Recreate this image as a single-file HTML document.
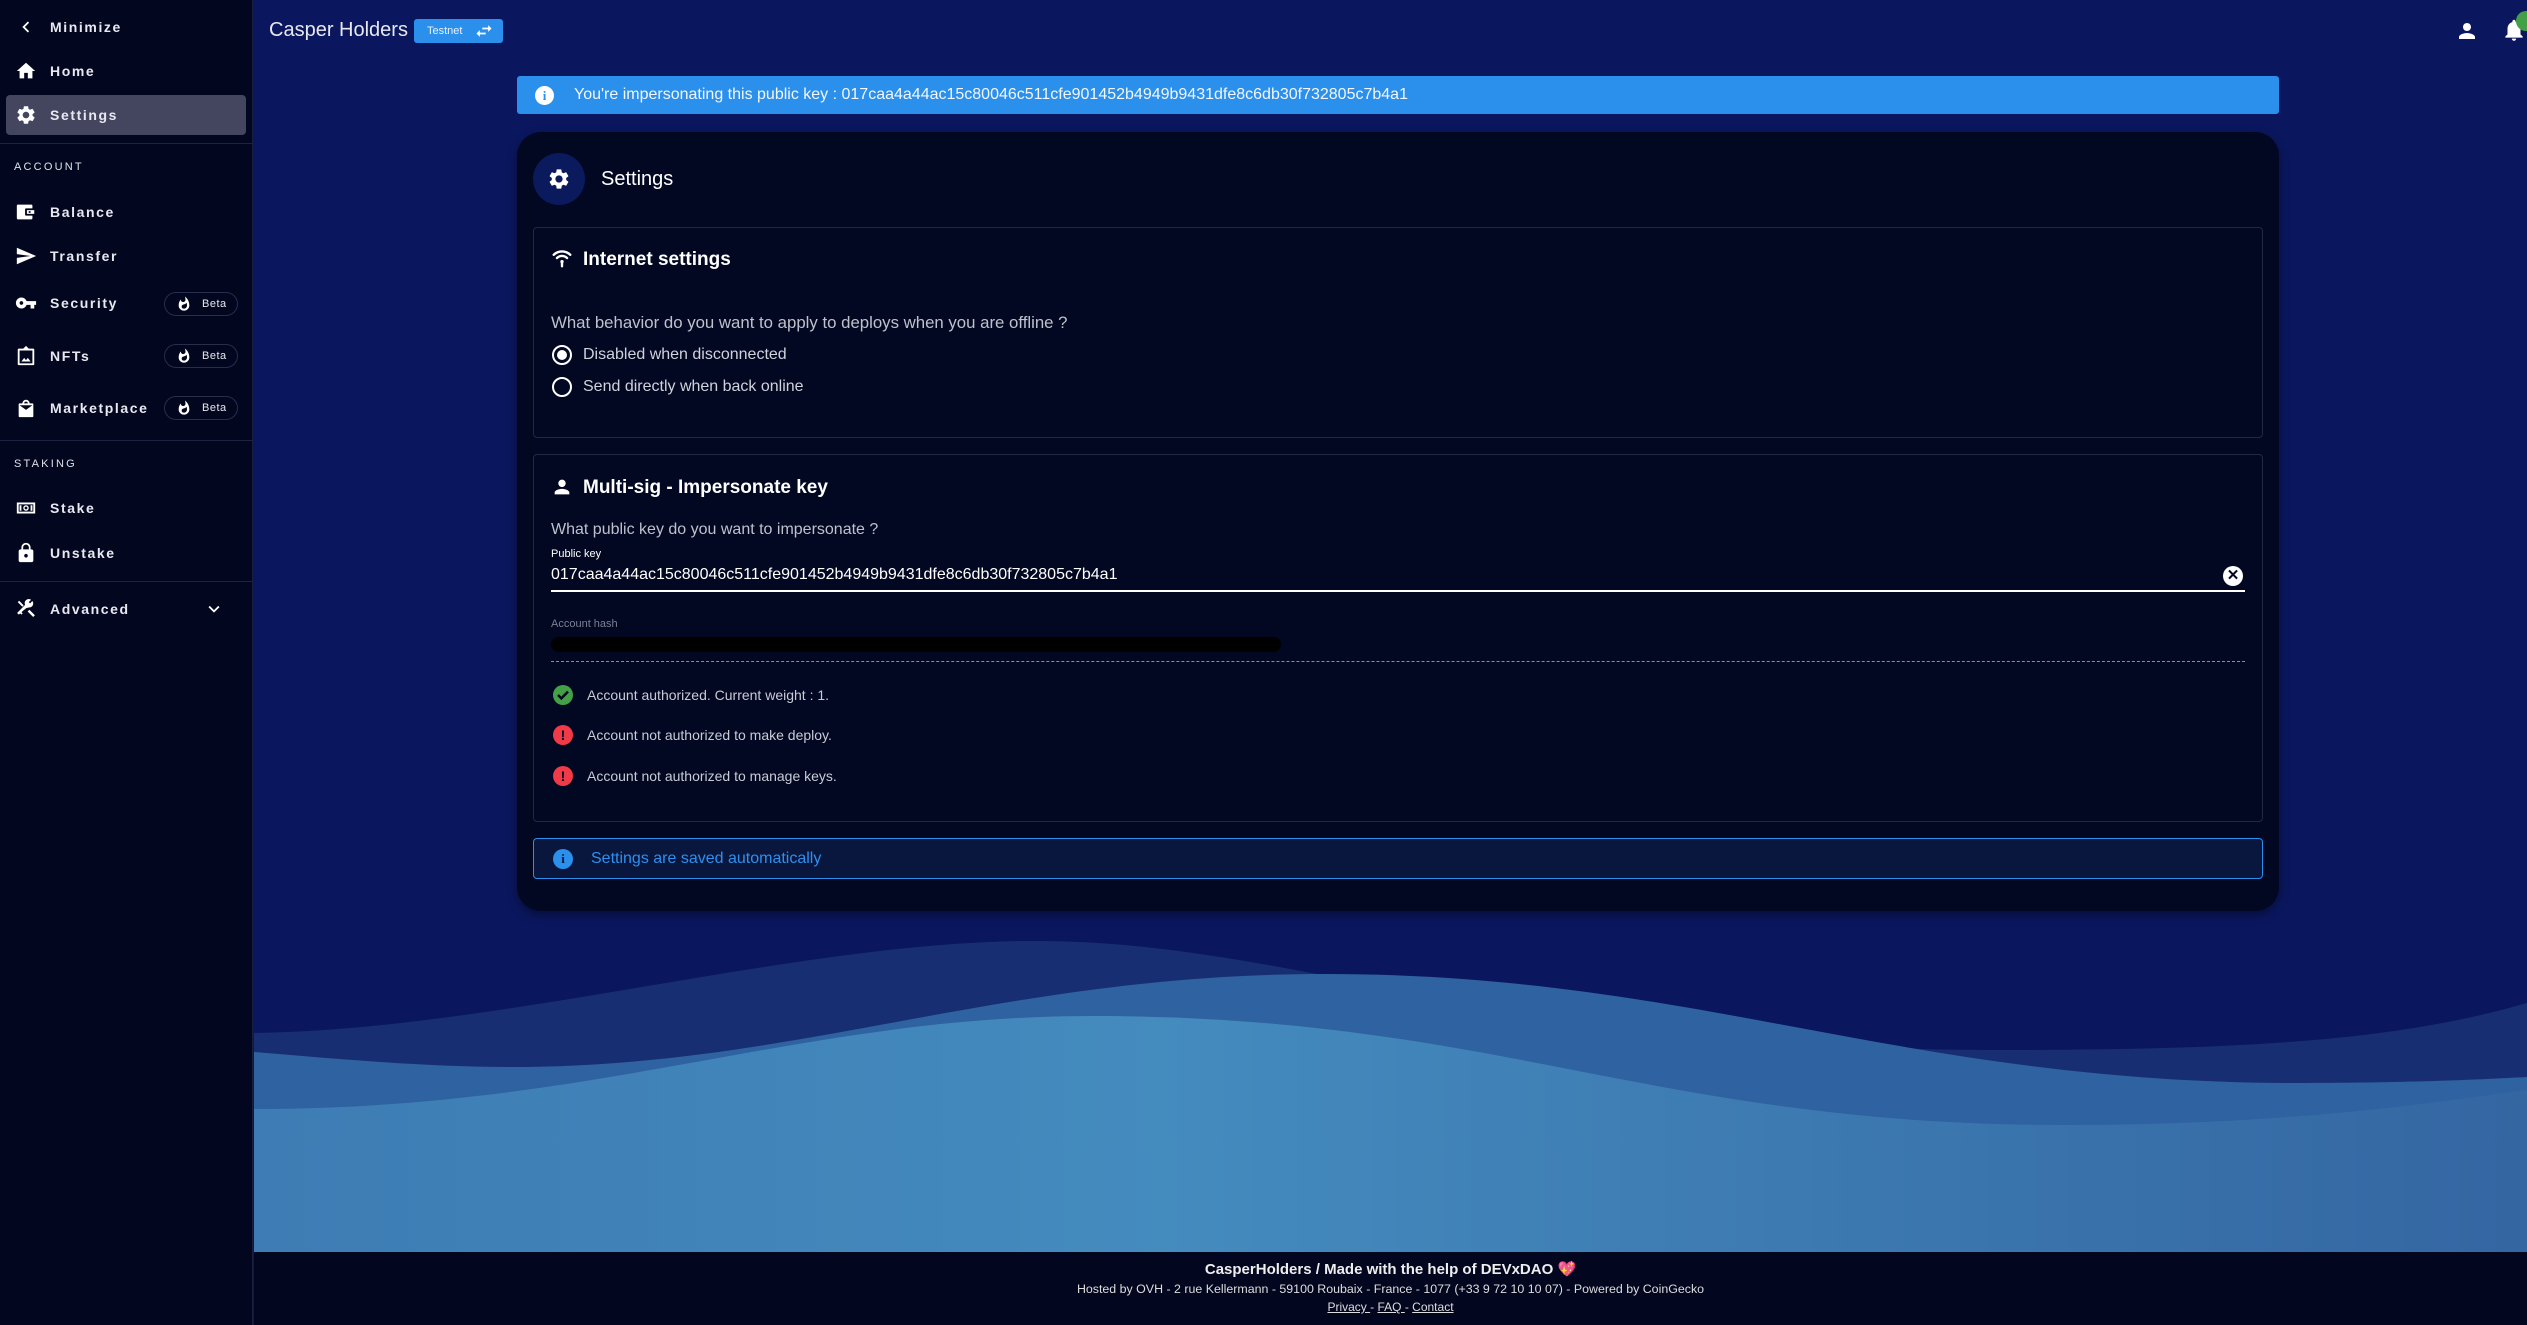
<!DOCTYPE html>
<html><head><meta charset="utf-8">
<style>
*{margin:0;padding:0;box-sizing:border-box}
body{width:2527px;height:1325px;overflow:hidden;background:#0a175e;font-family:"Liberation Sans",sans-serif;color:#fff;position:relative}
.abs{position:absolute}
#side{left:0;top:0;width:253px;height:1325px;background:#03061f;border-right:1px solid #1c2040}
.ni{position:absolute;left:0;width:253px;height:36px;display:flex;align-items:center}
.ni svg{position:absolute;left:15px;width:22px;height:22px;fill:#fff}
.ni span{position:absolute;left:50px;font-weight:bold;font-size:14px;letter-spacing:1.6px;color:#e8e8f0}
.sec{position:absolute;left:14px;font-size:11px;letter-spacing:2.2px;color:#e0e0e8}
.hr{position:absolute;left:0;width:253px;height:1px;background:#1e2240}
.beta{position:absolute;left:164px;width:74px;height:24px;border:1px solid #2a2d4a;border-radius:12px;font-size:11px;color:#e8e8f0}
.beta svg{position:absolute;left:11px;top:3px;width:16px;height:16px;fill:#fff}
.beta b{position:absolute;left:37px;top:5px;font-weight:normal;letter-spacing:.5px}
svg{display:block}
</style></head><body>

<div id="side" class="abs">
 <div class="ni" style="top:9px"><svg viewBox="0 0 24 24"><path d="M15.4 7.4L14 6l-6 6 6 6 1.4-1.4L10.8 12z"/></svg><span>Minimize</span></div>
 <div class="ni" style="top:53px"><svg viewBox="0 0 24 24"><path d="M10 20v-6h4v6h5v-8h3L12 3 2 12h3v8z"/></svg><span>Home</span></div>
 <div class="abs" style="left:6px;top:95px;width:240px;height:40px;background:#444660;border-radius:4px"></div>
 <div class="ni" style="top:97px"><svg viewBox="0 0 24 24"><path d="M19.14 12.94c.04-.3.06-.61.06-.94 0-.32-.02-.64-.07-.94l2.03-1.58c.18-.14.23-.41.12-.61l-1.92-3.32c-.12-.22-.37-.29-.59-.22l-2.39.96c-.5-.38-1.03-.7-1.62-.94l-.36-2.54c-.04-.24-.24-.41-.48-.41h-3.84c-.24 0-.43.17-.47.41l-.36 2.54c-.59.24-1.13.57-1.62.94l-2.39-.96c-.22-.08-.47 0-.59.22L2.74 8.87c-.12.21-.08.47.12.61l2.03 1.58c-.05.3-.09.63-.09.94s.02.64.07.94l-2.03 1.58c-.18.14-.23.41-.12.61l1.92 3.32c.12.22.37.29.59.22l2.39-.96c.5.38 1.03.7 1.62.94l.36 2.54c.05.24.24.41.48.41h3.84c.24 0 .44-.17.47-.41l.36-2.54c.59-.24 1.13-.56 1.62-.94l2.39.96c.22.08.47 0 .59-.22l1.92-3.32c.12-.22.07-.47-.12-.61l-2.01-1.58zM12 15.6c-1.98 0-3.6-1.62-3.6-3.6s1.62-3.6 3.6-3.6 3.6 1.62 3.6 3.6-1.62 3.6-3.6 3.6z"/></svg><span>Settings</span></div>
 <div class="hr" style="top:143px"></div>
 <div class="sec" style="top:161px">ACCOUNT</div>
 <div class="ni" style="top:194px"><svg viewBox="0 0 24 24"><path d="M3 4h15a1 1 0 011 1v3h-7a1 1 0 00-1 1v6a1 1 0 001 1h7v3a1 1 0 01-1 1H3a1 1 0 01-1-1V5a1 1 0 011-1zm10 6h8v4h-8zm2 1v2h2v-2z"/></svg><span>Balance</span></div>
 <div class="ni" style="top:238px"><svg viewBox="0 0 24 24"><path d="M2.01 21L23 12 2.01 3 2 10l15 2-15 2z"/></svg><span>Transfer</span></div>
 <div class="ni" style="top:285px"><svg viewBox="0 0 24 24"><path d="M12.65 10C11.83 7.67 9.61 6 7 6c-3.31 0-6 2.69-6 6s2.69 6 6 6c2.61 0 4.83-1.67 5.65-4H17v4h4v-4h2v-4H12.65zM7 14c-1.1 0-2-.9-2-2s.9-2 2-2 2 .9 2 2-.9 2-2 2z"/></svg><span>Security</span></div>
 <div class="beta" style="top:292px"><svg viewBox="0 0 24 24"><path d="M13.5.67s.74 2.65.74 4.8c0 2.06-1.35 3.73-3.41 3.73-2.07 0-3.63-1.67-3.63-3.73l.03-.36C5.21 7.51 4 10.62 4 14c0 4.42 3.58 8 8 8s8-3.58 8-8C20 8.61 17.41 3.8 13.5.67zM11.71 19c-1.78 0-3.22-1.4-3.22-3.14 0-1.62 1.05-2.76 2.81-3.12 1.77-.36 3.6-1.21 4.62-2.58.39 1.29.59 2.65.59 4.04 0 2.65-2.15 4.8-4.8 4.8z"/></svg><b>Beta</b></div>
 <div class="ni" style="top:338px"><svg viewBox="0 0 24 24"><path d="M12 1l3 3h5a1 1 0 011 1v16a1 1 0 01-1 1H4a1 1 0 01-1-1V5a1 1 0 011-1h5zM5 6v14h14V6zm2 12l3-4 2 2.5 2-2.5 3 4z"/></svg><span>NFTs</span></div>
 <div class="beta" style="top:344px"><svg viewBox="0 0 24 24"><path d="M13.5.67s.74 2.65.74 4.8c0 2.06-1.35 3.73-3.41 3.73-2.07 0-3.63-1.67-3.63-3.73l.03-.36C5.21 7.51 4 10.62 4 14c0 4.42 3.58 8 8 8s8-3.58 8-8C20 8.61 17.41 3.8 13.5.67zM11.71 19c-1.78 0-3.22-1.4-3.22-3.14 0-1.62 1.05-2.76 2.81-3.12 1.77-.36 3.6-1.21 4.62-2.58.39 1.29.59 2.65.59 4.04 0 2.65-2.15 4.8-4.8 4.8z"/></svg><b>Beta</b></div>
 <div class="ni" style="top:390px"><svg viewBox="0 0 24 24"><path d="M8 7a4 4 0 018 0h3a1 1 0 011 1v13a1 1 0 01-1 1H5a1 1 0 01-1-1V8a1 1 0 011-1zm2 0h4a2 2 0 00-4 0zM5 9l7 5 7-5z"/></svg><span>Marketplace</span></div>
 <div class="beta" style="top:396px"><svg viewBox="0 0 24 24"><path d="M13.5.67s.74 2.65.74 4.8c0 2.06-1.35 3.73-3.41 3.73-2.07 0-3.63-1.67-3.63-3.73l.03-.36C5.21 7.51 4 10.62 4 14c0 4.42 3.58 8 8 8s8-3.58 8-8C20 8.61 17.41 3.8 13.5.67zM11.71 19c-1.78 0-3.22-1.4-3.22-3.14 0-1.62 1.05-2.76 2.81-3.12 1.77-.36 3.6-1.21 4.62-2.58.39 1.29.59 2.65.59 4.04 0 2.65-2.15 4.8-4.8 4.8z"/></svg><b>Beta</b></div>
 <div class="hr" style="top:440px"></div>
 <div class="sec" style="top:458px">STAKING</div>
 <div class="ni" style="top:490px"><svg viewBox="0 0 24 24"><path d="M2 6h20v12H2zm2 2v8h16V8zm1 1h2v6H5zm12 0h2v6h-2zm-5 0a3 3 0 110 6 3 3 0 010-6zm0 1.5a1.5 1.5 0 100 3 1.5 1.5 0 000-3z"/></svg><span>Stake</span></div>
 <div class="ni" style="top:535px"><svg viewBox="0 0 24 24"><path d="M18 8h-1V6c0-2.76-2.24-5-5-5S7 3.24 7 6v2H6c-1.1 0-2 .9-2 2v10c0 1.1.9 2 2 2h12c1.1 0 2-.9 2-2V10c0-1.1-.9-2-2-2zm-6 9c-1.1 0-2-.9-2-2s.9-2 2-2 2 .9 2 2-.9 2-2 2zm3.1-9H8.9V6c0-1.71 1.39-3.1 3.1-3.1 1.71 0 3.1 1.39 3.1 3.1v2z"/></svg><span>Unstake</span></div>
 <div class="hr" style="top:581px"></div>
 <div class="ni" style="top:591px"><svg viewBox="0 0 24 24"><path d="M13.8 14.7l6 6 1.9-1.9-6-6zM17.5 10a4.5 4.5 0 001.5-6.7l-2.6 2.6-1.4-1.4 2.6-2.6A4.5 4.5 0 0011 7.5L2.3 16.3l1.9 1.9 1.4-1.4 1.4 1.4 1.4-1.4-1.4-1.4L12.5 10.9z M3 4.5l1.5-1.5 5 5-1.5 1.5z"/></svg><span>Advanced</span>
  <svg viewBox="0 0 24 24" style="left:203px;width:22px"><path d="M7.4 8.6L12 13.2l4.6-4.6L18 10l-6 6-6-6z"/></svg></div>
</div>

<!-- header -->
<div class="abs" style="left:269px;top:19px;font-size:20px;color:#e8e8f0">Casper Holders</div>
<div class="abs" style="left:414px;top:19px;width:89px;height:24px;background:#2b8fec;border-radius:3px;font-size:11px;color:#e8f0ff">
 <span class="abs" style="left:13px;top:6px">Testnet</span>
 <svg class="abs" viewBox="0 0 24 24" style="left:60px;top:2px;width:20px;height:20px;fill:#fff"><path d="M6.99 11L3 15l3.99 4v-3H14v-2H6.99v-3zM21 9l-3.99-4v3H10v2h7.01v3L21 9z"/></svg>
</div>
<svg class="abs" viewBox="0 0 24 24" style="left:2455px;top:19px;width:24px;height:24px;fill:#fff"><path d="M12 12c2.21 0 4-1.79 4-4s-1.79-4-4-4-4 1.79-4 4 1.79 4 4 4zm0 2c-2.67 0-8 1.34-8 4v2h16v-2c0-2.66-5.33-4-8-4z"/></svg>
<svg class="abs" viewBox="0 0 24 24" style="left:2501px;top:17px;width:26px;height:26px;fill:#fff"><path d="M12 22c1.1 0 2-.9 2-2h-4c0 1.1.89 2 2 2zm6-6v-5c0-3.07-1.64-5.64-4.5-6.32V4c0-.83-.67-1.5-1.5-1.5s-1.5.67-1.5 1.5v.68C7.63 5.36 6 7.92 6 11v5l-2 2v1h16v-1l-2-2z"/></svg>
<div class="abs" style="left:2516px;top:11px;width:20px;height:20px;border-radius:10px;background:#43a047"></div>

<!-- waves -->
<svg class="abs" style="left:254px;top:900px" width="2273" height="352" viewBox="254 900 2273 352">
 <defs><linearGradient id="g3" x1="0" x2="1"><stop offset="0" stop-color="#3d7cb4"/><stop offset=".4" stop-color="#448bbe"/><stop offset="1" stop-color="#3466a2"/></linearGradient></defs>
 <path d="M254 1033 C500 1030 800 941 1034 941 C1300 941 1500 1050 2000 1050 C2250 1050 2400 1040 2527 1003 V1252 H254Z" fill="#172f72"/>
 <path d="M254 1052 C350 1060 430 1067 511 1067 C800 1067 1000 974 1325 974 C1700 974 1900 1083 2297 1083 C2400 1083 2470 1080 2527 1077 V1252 H254Z" fill="#2f62a0"/>
 <path d="M254 1109 C600 1109 800 1016 1092 1016 C1500 1016 1650 1125 2065 1125 C2300 1125 2450 1100 2527 1090 V1252 H254Z" fill="url(#g3)"/>
</svg>

<!-- banner -->
<div class="abs" style="left:517px;top:76px;width:1762px;height:38px;background:#2b8fec;border-radius:3px">
 <div class="abs" style="left:18px;top:10px;width:19px;height:19px;border-radius:50%;background:#fff;color:#2b8fec;font-weight:bold;font-size:13px;text-align:center;line-height:19px;font-family:'Liberation Serif',serif">i</div>
 <div class="abs" style="left:57px;top:10px;font-size:16px;color:#f2f6ff">You're impersonating this public key : 017caa4a44ac15c80046c511cfe901452b4949b9431dfe8c6db30f732805c7b4a1</div>
</div>

<!-- card -->
<div class="abs" style="left:517px;top:132px;width:1762px;height:779px;background:#020722;border-radius:24px;box-shadow:0 4px 10px rgba(0,0,0,.4)"></div>
<div class="abs" style="left:533px;top:153px;width:52px;height:52px;border-radius:50%;background:#0b1a5c"></div>
<svg class="abs" viewBox="0 0 24 24" style="left:547px;top:167px;width:24px;height:24px;fill:#fff"><path d="M19.14 12.94c.04-.3.06-.61.06-.94 0-.32-.02-.64-.07-.94l2.03-1.58c.18-.14.23-.41.12-.61l-1.92-3.32c-.12-.22-.37-.29-.59-.22l-2.39.96c-.5-.38-1.03-.7-1.62-.94l-.36-2.54c-.04-.24-.24-.41-.48-.41h-3.84c-.24 0-.43.17-.47.41l-.36 2.54c-.59.24-1.13.57-1.62.94l-2.39-.96c-.22-.08-.47 0-.59.22L2.74 8.87c-.12.21-.08.47.12.61l2.03 1.58c-.05.3-.09.63-.09.94s.02.64.07.94l-2.03 1.58c-.18.14-.23.41-.12.61l1.92 3.32c.12.22.37.29.59.22l2.39-.96c.5.38 1.03.7 1.62.94l.36 2.54c.05.24.24.41.48.41h3.84c.24 0 .44-.17.47-.41l.36-2.54c.59-.24 1.13-.56 1.62-.94l2.39.96c.22.08.47 0 .59-.22l1.92-3.32c.12-.22.07-.47-.12-.61l-2.01-1.58zM12 15.6c-1.98 0-3.6-1.62-3.6-3.6s1.62-3.6 3.6-3.6 3.6 1.62 3.6 3.6-1.62 3.6-3.6 3.6z"/></svg>
<div class="abs" style="left:601px;top:168px;font-size:20px">Settings</div>

<!-- box1 -->
<div class="abs" style="left:533px;top:227px;width:1730px;height:211px;border:1px solid #24283f;border-radius:4px"></div>
<svg class="abs" viewBox="0 0 24 24" style="left:551px;top:247px;width:22px;height:22px;fill:none;stroke:#fff;stroke-width:2.6;stroke-linecap:round"><path d="M3 8.5a13 13 0 0118 0M6.5 12a8 8 0 0111 0"/><circle cx="12" cy="16" r="1.8" fill="#fff" stroke="none"/><path d="M12 17v4"/></svg>
<div class="abs" style="left:583px;top:249px;font-size:19px;font-weight:bold">Internet settings</div>
<div class="abs" style="left:551px;top:313px;color:#bfc1cc;font-size:16.8px">What behavior do you want to apply to deploys when you are offline ?</div>
<div class="abs" style="left:552px;top:345px;width:20px;height:20px;border:2px solid #fff;border-radius:50%"><div style="margin:3px;width:10px;height:10px;border-radius:50%;background:#fff"></div></div>
<div class="abs" style="left:583px;top:346px;font-size:16px;color:#d0d2dc">Disabled when disconnected</div>
<div class="abs" style="left:552px;top:377px;width:20px;height:20px;border:2px solid #fff;border-radius:50%"></div>
<div class="abs" style="left:583px;top:378px;font-size:16px;color:#d0d2dc">Send directly when back online</div>

<!-- box2 -->
<div class="abs" style="left:533px;top:454px;width:1730px;height:368px;border:1px solid #24283f;border-radius:4px"></div>
<svg class="abs" viewBox="0 0 24 24" style="left:551px;top:476px;width:22px;height:22px;fill:#fff"><path d="M12 12c2.21 0 4-1.79 4-4s-1.79-4-4-4-4 1.79-4 4 1.79 4 4 4zm0 2c-2.67 0-8 1.34-8 4v2h16v-2c0-2.66-5.33-4-8-4z"/></svg>
<div class="abs" style="left:583px;top:477px;font-size:19px;font-weight:bold">Multi-sig - Impersonate key</div>
<div class="abs" style="left:551px;top:521px;color:#bfc1cc;font-size:16px">What public key do you want to impersonate ?</div>
<div class="abs" style="left:551px;top:548px;font-size:11px;color:#fff">Public key</div>
<div class="abs" style="left:551px;top:566px;font-size:16px;color:#fff">017caa4a44ac15c80046c511cfe901452b4949b9431dfe8c6db30f732805c7b4a1</div>
<div class="abs" style="left:551px;top:590px;width:1694px;height:2px;background:#fff"></div>
<div class="abs" style="left:2223px;top:566px;width:20px;height:20px;border-radius:50%;background:#fff;color:#020722;font-weight:bold;font-size:15px;text-align:center;line-height:20px">✕</div>
<div class="abs" style="left:551px;top:618px;font-size:11px;color:#7d8093">Account hash</div>
<div class="abs" style="left:551px;top:637px;width:730px;height:15px;background:#000;border-radius:8px"></div>
<div class="abs" style="left:551px;top:661px;width:1694px;border-top:1px dashed #8a8ca0"></div>
<div class="abs" style="left:553px;top:685px;width:20px;height:20px;border-radius:50%;background:#43a047"><svg viewBox="0 0 24 24" width="20" height="20" style="fill:none;stroke:#020722;stroke-width:3"><path d="M6 12l4 4 8-8"/></svg></div>
<div class="abs" style="left:587px;top:687px;font-size:14px;color:#c9cbd6">Account authorized. Current weight : 1.</div>
<div class="abs" style="left:553px;top:725px;width:20px;height:20px;border-radius:50%;background:#f03a47;color:#020722;font-weight:bold;font-size:14px;text-align:center;line-height:20px">!</div>
<div class="abs" style="left:587px;top:727px;font-size:14px;color:#c9cbd6">Account not authorized to make deploy.</div>
<div class="abs" style="left:553px;top:766px;width:20px;height:20px;border-radius:50%;background:#f03a47;color:#020722;font-weight:bold;font-size:14px;text-align:center;line-height:20px">!</div>
<div class="abs" style="left:587px;top:768px;font-size:14px;color:#c9cbd6">Account not authorized to manage keys.</div>

<!-- info -->
<div class="abs" style="left:533px;top:838px;width:1730px;height:41px;border:1px solid #2b8fec;border-radius:4px;background:#09173f">
 <div class="abs" style="left:19px;top:10px;width:20px;height:20px;border-radius:50%;background:#2b8fec;color:#09173f;font-weight:bold;font-size:13px;text-align:center;line-height:20px;font-family:'Liberation Serif',serif">i</div>
 <div class="abs" style="left:57px;top:11px;font-size:16px;color:#2e8fee">Settings are saved automatically</div>
</div>

<!-- footer -->
<div class="abs" style="left:254px;top:1252px;width:2273px;height:73px;background:#03061f;text-align:center">
 <div style="margin-top:8px;font-size:15px;font-weight:bold;color:#eee">CasperHolders / Made with the help of DEVxDAO <span style="color:#ff5fa0">💖</span></div>
 <div style="margin-top:4px;font-size:12.4px;color:#ddd">Hosted by OVH - 2 rue Kellermann - 59100 Roubaix - France - 1077 (+33 9 72 10 10 07) - Powered by CoinGecko</div>
 <div style="margin-top:4px;font-size:12px;color:#ddd"><u>Privacy </u> - <u>FAQ </u> - <u>Contact</u></div>
</div>
</body></html>
